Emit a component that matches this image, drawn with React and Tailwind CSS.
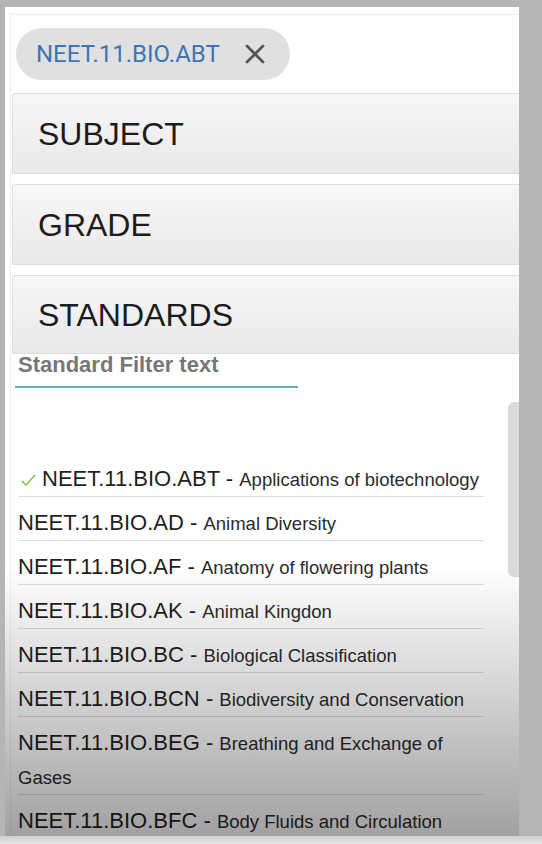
const STANDARDS = [
  { code: 'NEET.11.BIO.ABT', name: 'Applications of biotechnology', checked: true },
  { code: 'NEET.11.BIO.AD', name: 'Animal Diversity' },
  { code: 'NEET.11.BIO.AF', name: 'Anatomy of flowering plants' },
  { code: 'NEET.11.BIO.AK', name: 'Animal Kingdon' },
  { code: 'NEET.11.BIO.BC', name: 'Biological Classification' },
  { code: 'NEET.11.BIO.BCN', name: 'Biodiversity and Conservation' },
  { code: 'NEET.11.BIO.BEG', name: 'Breathing and Exchange of Gases' },
  { code: 'NEET.11.BIO.BFC', name: 'Body Fluids and Circulation' },
];

function SectionHeader({ title, tall = true }) {
  return (
    <div
      className={`flex w-[520px] items-center rounded-tl-[3px] border border-[#dedede] bg-gradient-to-b from-[#f7f7f7] to-[#e9e9e9] pl-[25px] text-[32px] text-[#1c1c1c] ${tall ? 'h-[81px]' : 'h-[79px]'}`}
    >
      {title}
    </div>
  );
}

function StandardRow({ item }) {
  return (
    <div className="w-[466px] border-b border-[#dcdcdc] pt-[9px] text-[22px] leading-[34px] text-[#1f1f1f]">
      {item.checked ? (
        <svg width="15" height="12" viewBox="0 0 15 12" className="ml-[3px] mr-[6px] inline-block align-baseline">
          <polyline points="1,7 5,11 14,1" fill="none" stroke="#8bc34a" strokeWidth="1.6" />
        </svg>
      ) : null}
      {item.code} - <span className="text-[18.5px] leading-[1] text-[#2b2b2b]">{item.name}</span>
    </div>
  );
}

export default function App() {
  return (
    <div className="relative h-[844px] overflow-hidden bg-[#b5b5b5] pl-[5px] pt-[7px] font-['Liberation_Sans',Arial,sans-serif]">
      <div className="relative h-[829px] w-[514px] overflow-hidden bg-white">
        <div className="ml-[5px] mt-[7px] h-full border-l border-t border-[#eeeeee]">
          <div className="ml-[5px] mt-[13px] flex h-[52px] w-[274px] items-center rounded-full bg-[#e0e0e0] pl-[20px] font-['Roboto',sans-serif] text-[24px] text-[#3e74b3]">
            <span>NEET.11.BIO.ABT</span>
            <svg width="20" height="20" viewBox="0 0 20 20" className="ml-[25px]">
              <path d="M2 2 L18 18 M18 2 L2 18" stroke="#555555" strokeWidth="2.8" strokeLinecap="round" />
            </svg>
          </div>

          <div className="mt-[13px] ml-[1px] flex flex-col gap-[10px]">
            <SectionHeader title="SUBJECT" />
            <SectionHeader title="GRADE" />
            <SectionHeader title="STANDARDS" tall={false} />
          </div>

          <div className="ml-[4px] -mt-[1px] h-[35px] w-[283px] border-b-2 border-[#5fb3b3] pl-[3px] text-[22px] font-bold leading-[24px] text-[#777777]">
            Standard Filter text
          </div>

          <div className="ml-[7px] mt-[65px]">
            {STANDARDS.map((item) => (
              <StandardRow key={item.code} item={item} />
            ))}
          </div>
        </div>

        <div className="absolute right-0 top-[395px] h-[175px] w-[11px] rounded-l-md bg-[#dadada]" />
        <div className="pointer-events-none absolute inset-x-0 bottom-0 h-[270px] bg-gradient-to-b from-[rgba(0,0,0,0)] to-[rgba(0,0,0,0.37)]" />
      </div>
      <div className="absolute inset-x-0 bottom-0 h-[8px] bg-gradient-to-b from-[#cfcfcf] to-[#e6e6e6]" />
    </div>
  );
}
